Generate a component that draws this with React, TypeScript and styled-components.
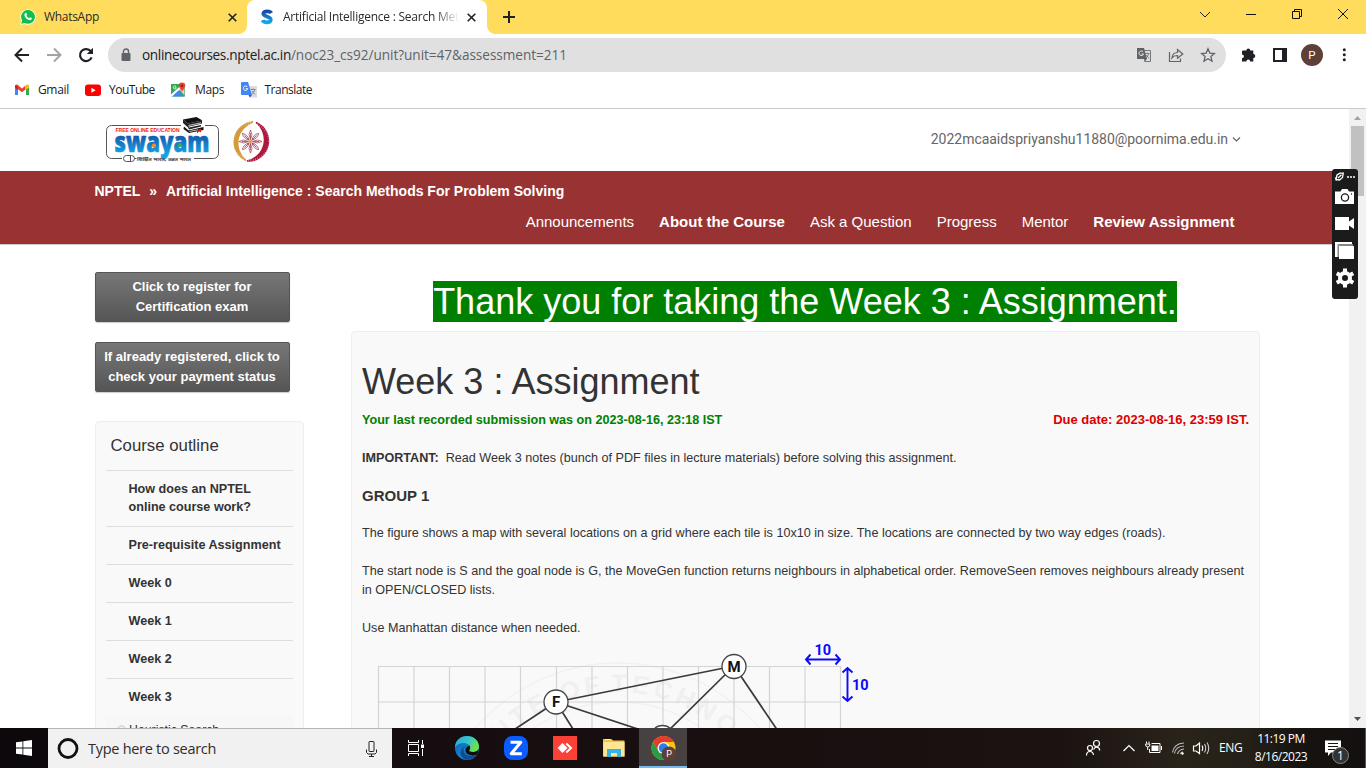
import React from "react";
import styled, { createGlobalStyle, css } from "styled-components";

const GlobalStyle = createGlobalStyle`
  * { box-sizing: border-box; }
  html, body { margin: 0; padding: 0; overflow: hidden; }
  body { font-family: "Liberation Sans", Arial, sans-serif; color: #333; background: #fff; }
  h1, h2, p { margin: 0; font-weight: normal; }
  svg { display: block; flex: none; }
`;

const ui = css`font-family: "Open Sans", "Noto Sans", sans-serif;`;

const Desktop = styled.div`
  position: relative;
  width: 1366px;
  height: 768px;
  display: flex;
  flex-direction: column;
  overflow: hidden;
`;

/* ---------- browser window ---------- */

const TabStrip = styled.div`
  ${ui}
  height: 34px;
  flex: none;
  display: flex;
  background: #ffdc5c;
  font-size: 12px;
`;

const Tab = styled.div<{ $active?: boolean; $width: number; $left: number }>`
  position: relative;
  width: ${(p) => p.$width}px;
  padding-left: ${(p) => p.$left}px;
  display: flex;
  align-items: center;
  background: ${(p) => (p.$active ? "#fff" : "transparent")};
  border-radius: 8px 8px 0 0;
  color: #2b2b2b;
  ${(p) =>
    p.$active &&
    css`
      &::before, &::after {
        content: "";
        position: absolute;
        bottom: 0;
        width: 8px;
        height: 8px;
      }
      &::before { left: -8px; background: radial-gradient(circle at 0 0, #ffdc5c 7.5px, #fff 8px); }
      &::after { right: -8px; background: radial-gradient(circle at 100% 0, #ffdc5c 7.5px, #fff 8px); }
    `}
`;

const TabTitle = styled.span<{ $width: number; $fade?: boolean; $ls: number }>`
  width: ${(p) => p.$width}px;
  margin-left: ${(p) => (p.$fade ? 9 : 8)}px;
  overflow: hidden;
  white-space: nowrap;
  line-height: 18px;
  letter-spacing: ${(p) => p.$ls}px;
  ${(p) => p.$fade && css`margin-right: 8px; mask-image: linear-gradient(90deg, #000 86%, transparent 100%);`}
`;

const NewTab = styled.div`
  flex: 1;
  display: flex;
  align-items: center;
  padding-left: 16px;
`;

const WindowButtons = styled.div`
  display: flex;
  width: 184px;
  padding: 5px 0 0 14px;
  gap: 28px;
`;

const Toolbar = styled.div`
  ${ui}
  height: 42px;
  flex: none;
  display: flex;
  align-items: center;
  padding-left: 14px;
`;

const NavButtons = styled.div`
  display: flex;
  gap: 16px;
  width: 94px;
`;

const AddressBar = styled.div`
  width: 1118px;
  height: 34px;
  border-radius: 17px;
  background: #e0e0e0;
  display: flex;
  align-items: center;
  padding: 0 10px 0 12px;
  font-size: 13.6px;
`;

const Url = styled.div`
  flex: 1;
  margin-left: 10px;
  padding-bottom: 1px;
  white-space: nowrap;
  color: #5f6368;
`;

const UrlHost = styled.span`
  color: #202124;
  letter-spacing: -0.35px;
`;

const UrlPath = styled.span`
  letter-spacing: -0.04px;
`;

const AddressIcons = styled.div`
  display: flex;
  gap: 16px;
`;

const ToolbarIcons = styled.div`
  display: flex;
  align-items: center;
  gap: 15px;
  margin-left: 15px;
  color: #202124;
`;

const Avatar = styled.div`
  width: 22px;
  height: 22px;
  margin: 0 -4px 0 -2px;
  border-radius: 50%;
  background: #5d4037;
  color: #fff;
  font: 11.5px/22px Roboto, sans-serif;
  text-align: center;
`;

const Bookmarks = styled.div`
  ${ui}
  height: 33px;
  flex: none;
  display: flex;
  align-items: flex-start;
  padding: 5.5px 0 0 14px;
  border-bottom: 1px solid #c9c9c9;
  font-size: 12px;
  color: #202124;
`;

const Bookmark = styled.div<{ $width: number; $ls: number }>`
  display: flex;
  align-items: center;
  width: ${(p) => p.$width}px;
  height: 16px;
  gap: 8px;
  letter-spacing: ${(p) => p.$ls}px;
`;

/* ---------- page ---------- */

const Viewport = styled.div`
  height: 619px;
  flex: none;
  display: flex;
`;

const Page = styled.div`
  width: 1349px;
  height: 100%;
  overflow: hidden;
  display: flex;
  flex-direction: column;
`;

const SiteHeader = styled.header`
  height: 62px;
  flex: none;
  display: flex;
  align-items: flex-start;
  padding: 6px 108px 0 105px;
`;

const Account = styled.div`
  margin-left: auto;
  padding-top: 15px;
  display: flex;
  align-items: center;
  gap: 4px;
  font: 14px/18px Roboto, sans-serif;
  letter-spacing: -0.03px;
  color: #666;
`;

const CourseBar = styled.nav`
  height: 74px;
  flex: none;
  padding: 11px 114.5px 0 94.5px;
  background: #993333;
  border-bottom: 1px solid #ccc;
  color: #fff;
`;

const Breadcrumb = styled.div`
  display: flex;
  gap: 8.9px;
  font-size: 14px;
  line-height: 18px;
  font-weight: bold;
`;

const CourseLinks = styled.div`
  display: flex;
  justify-content: flex-end;
  gap: 25px;
  margin-top: 12px;
  font-size: 15px;
  line-height: 20px;
`;

const CourseLink = styled.span<{ $bold?: boolean }>`
  font-weight: ${(p) => (p.$bold ? "bold" : "normal")};
`;

const Columns = styled.div`
  display: flex;
  flex: 1;
  min-height: 0;
  padding: 27px 0 0 95px;
`;

const Sidebar = styled.aside`
  width: 209px;
  margin-right: 47px;
  flex: none;
`;

const DarkButton = styled.div`
  width: 195px;
  height: 50px;
  margin-bottom: 20px;
  padding: 4px 1px 0 0;
  border: 1px solid #555;
  border-radius: 2px;
  background: linear-gradient(#777, #555);
  box-shadow: 0 1px 1px rgba(0, 0, 0, 0.2);
  color: #fff;
  font-size: 13px;
  font-weight: bold;
  line-height: 20px;
  text-align: center;
  white-space: nowrap;
`;

const Outline = styled.div`
  width: 209px;
  margin-top: 29px;
  height: 330px;
  padding: 0 10px;
  background: #f9f9f9;
  border: 1px solid #eee;
  border-radius: 4px;
`;

const OutlineTitle = styled.h2`
  height: 48px;
  padding: 14px 0 0 4.5px;
  font-size: 16.8px;
  line-height: 20px;
`;

const OutlineItem = styled.div`
  padding: 8.5px 0 10.5px 22.5px;
  border-top: 1px solid #ddd;
  font-size: 12.6px;
  line-height: 18px;
  font-weight: bold;
  white-space: nowrap;
`;

const OutlineSubItem = styled.div`
  display: flex;
  align-items: center;
  height: 26px;
  padding: 1px 0 0 11px;
  gap: 3px;
  background: #f7f7f7;
  font-size: 12.3px;
`;

const Bullet = styled.span`
  width: 9px;
  height: 9px;
  border: 2px solid #ddd;
  border-radius: 50%;
`;

const Main = styled.main`
  width: 909px;
`;

const Thanks = styled.h1`
  height: 59px;
  padding: 7px 1px 0 0;
  text-align: center;
  font-size: 36px;
  line-height: 45px;
`;

const ThanksText = styled.span`
  background: #008000;
  color: #fff;
`;

const Panel = styled.section`
  height: 500px;
  padding: 30px 10px 0;
  background: #f9f9f9;
  border: 1px solid #eee;
  border-radius: 4px;
  font-size: 12.6px;
  line-height: 18.9px;
`;

const PanelTitle = styled.h1`
  font-size: 36px;
  line-height: 40px;
`;

const StatusRow = styled.div`
  display: flex;
  justify-content: space-between;
  margin: 9px 0 19px;
  font-weight: bold;
`;

const Submitted = styled.span`
  color: #008000;
`;

const Due = styled.span`
  color: #dc0000;
  font-size: 13px;
`;

const Para = styled.p`
  margin-bottom: 18.8px;
  white-space: nowrap;
`;

const GroupTitle = styled.p`
  margin-bottom: 18.8px;
  font-size: 15px;
  font-weight: bold;
`;

const MapFigure = styled.div`
  margin-top: -16.5px;
`;

const ScrollTrack = styled.div`
  width: 17px;
  display: flex;
  flex-direction: column;
  align-items: center;
  justify-content: space-between;
  background: #f1f1f1;
`;

const ScrollTop = styled.div`
  display: flex;
  flex-direction: column;
  align-items: center;
`;

const ScrollThumb = styled.div`
  width: 13px;
  height: 70px;
  background: #c1c1c1;
`;

const Recorder = styled.div`
  position: absolute;
  left: 1332px;
  top: 169px;
  width: 26px;
  height: 130px;
  border-radius: 3px;
  background: #1b1b1b;
`;

/* ---------- taskbar ---------- */

const Taskbar = styled.footer`
  ${ui}
  height: 40px;
  flex: none;
  display: flex;
  align-items: stretch;
  background: linear-gradient(90deg, #0d080b 0, #150d0f 420px, #1a1010 900px, #1b1311 1060px, #29231a 1180px, #262118 1240px, #151210 1310px, #14100f 100%);
  color: #fff;
`;

const Cell = styled.div<{ $width: number; $active?: boolean }>`
  width: ${(p) => p.$width}px;
  display: flex;
  align-items: center;
  justify-content: center;
  background: ${(p) => (p.$active ? "#474141" : "transparent")};
  border-bottom: ${(p) => (p.$active ? "2px solid #76b9ed" : "0")};
  padding: ${(p) => (p.$active ? "3px 0 0 1px" : "0")};
`;

const Search = styled.div`
  width: 344px;
  display: flex;
  align-items: center;
  padding: 0 14px 0 9px;
  background: #f1f1f1;
  border-top: 1px solid #b5b5b5;
  color: #2d2d2d;
  font-size: 14.5px;
  letter-spacing: -0.28px;
`;

const SearchText = styled.span`
  flex: 1;
  margin-left: 9px;
`;

const Tray = styled.div`
  margin-left: auto;
  display: flex;
  align-items: center;
  font-size: 12px;
`;

const Lang = styled.span`
  width: 25px;
  margin: 0 0 1px 7px;
  letter-spacing: -0.4px;
`;

const Clock = styled.div`
  width: 66px;
  margin-left: 4px;
  text-align: center;
  line-height: 18px;
  letter-spacing: -0.5px;
`;

const Notice = styled.div`
  width: 46px;
  height: 40px;
  margin-left: 6px;
  border-right: 1px solid #5a5653;
`;

const CloseX = ({ size = 9 }: { size?: number }) => (
  <svg width={size} height={size} viewBox="0 0 9 9" stroke="#202124" strokeWidth="1.6">
    <path d="M0.7 0.7 8.3 8.3M8.3 0.7 0.7 8.3" />
  </svg>
);

const WhatsAppIcon = () => (
  <svg width="16" height="16" viewBox="0 0 16 16">
    <path d="M0.2 15.8 1.2 11.6A7.700 7.700 0 1 1 4.600 14.900Z" fill="#fff" />
    <path d="M1.200 14.800 2.100 11.400A6.900 6.900 0 1 1 4.700 13.900Z" fill="#10bf4b" />
    <path d="M5.200 4.200c.5-.5 1-.4 1.200 0l.7 1.500-.7 1q.9 1.700 2.700 2.500l.9-.9 1.700.8c.4.4 0 1.800-1.300 2.100-2.500.3-6-2.800-6-5.400 0-.7.300-1.200.8-1.600Z" fill="#fff" />
  </svg>
);

const SwayamTabIcon = () => (
  <svg width="14" height="16" viewBox="0 0 14 16" fill="none">
    <defs>
      <linearGradient id="sg" x1="0" y1="0" x2="0" y2="1">
        <stop offset="0" stopColor="#1749a5" />
        <stop offset="1" stopColor="#10a8e8" />
      </linearGradient>
    </defs>
    <path d="M11.300 4.200C10 1.800 4 1.500 3.300 4.600 2.800 8 11.200 6.800 10.800 11 10.300 14.500 3.600 13.800 2.500 11.300" stroke="url(#sg)" strokeWidth="3.700" />
  </svg>
);

const Books = () => (
  <g>
    <path d="M183 119.500 196.500 117 202.500 120.500 188 123.500Z" fill="#111" />
    <path d="M183 119.500V123L187.500 127 202 123.500V120.500L188 123.500Z" fill="#222" />
    <path d="M184 126.500 188.500 130.500 203.500 127V130L189 133 183.500 129Z" fill="#111" />
    <path d="M186 123.500 189 127.500 201 125V126.500L189 129.500Z" fill="#222" />
    <path d="M188.500 125.500 201 122.800M189.500 131.500 198 129.700" stroke="#eee" strokeWidth=".8" />
    <path d="M197 130.500 201 128.500V132.500L199 131.500 197 133.500Z" fill="#e31b23" />
  </g>
);

const Logos = () => (
  <svg width="170" height="52" viewBox="105 115 170 52">
    <defs>
      <linearGradient id="sw" x1="0" y1="0" x2="0" y2="1">
        <stop offset="0.350" stopColor="#1552a8" />
        <stop offset="0.850" stopColor="#12a4e4" />
      </linearGradient>
    </defs>
    <rect x="106.500" y="125.500" width="112" height="33" rx="5" fill="#fff" stroke="#555" />
    <rect x="122" y="157" width="72" height="4" fill="#fff" />
    <rect x="181" y="123" width="24" height="5" fill="#fff" />
    <text x="115.500" y="132" fontFamily="Liberation Sans" fontWeight="bold" fontSize="5" fill="#e31b23" textLength="64">FREE ONLINE EDUCATION</text>
    <text x="114.500" y="151.500" fontFamily="Open Sans" fontWeight="800" fontSize="29" fill="url(#sw)" stroke="url(#sw)" strokeWidth=".7" textLength="95" lengthAdjust="spacingAndGlyphs">swayam</text>
    <rect x="152" y="143.500" width="4" height="4" rx="1.500" fill="#f08a24" />
    <rect x="178" y="143" width="4" height="4" rx="1.500" fill="#3aa655" />
    <Books />
    <rect x="123.500" y="155.500" width="11" height="6" rx="3" fill="#fff" stroke="#555" />
    <path d="M130.500 155.500v6M134.500 158.500h2" stroke="#555" fill="none" />
    <text x="137" y="160.500" fontFamily="Noto Sans, sans-serif" fontSize="5" fill="#333" stroke="#555" strokeWidth=".2" textLength="54" lengthAdjust="spacingAndGlyphs">शिक्षित भारत, उन्नत भारत</text>
    <path d="M253 122A20.200 20.200 0 0 0 246 160.500 22.200 22.200 0 0 1 253 122Z" fill="#d49a3a" stroke="#d49a3a" strokeWidth="1.500" />
    <path d="M256 122.500A20 20 0 0 1 247 161 21.700 21.700 0 0 0 256 122.500Z" fill="#b0173d" stroke="#b0173d" strokeWidth="1.500" />
    <g fill="none">
      <circle cx="251" cy="141.500" r="18.600" stroke="#fff" strokeOpacity=".45" strokeWidth="3" strokeDasharray=".7 1.700" />
      <g stroke="#a4485a" strokeWidth="0.800">
        {[0, 45, 90, 135, 180, 225, 270, 315].map((a) => (
          <path key={a} transform={`rotate(${a} 250.500 141.500)`} d="M250.500 139.500Q247.500 134.500 250.500 130 253.500 134.500 250.500 139.500ZM250.500 139.500V133" />
        ))}
      </g>
      <circle cx="250.500" cy="141.500" r="1.800" fill="#e8a33b" />
    </g>
  </svg>
);

const gridX = [378.5, 414, 449.5, 485, 520.5, 556.5, 592, 627.5, 663, 698.5, 734, 769.5, 805, 840.5];

const MapNode = ({ x, y, label }: { x: number; y: number; label?: string }) => (
  <g>
    <circle cx={x} cy={y} r="12" fill="#fff" stroke="#444" strokeWidth="1.300" />
    {label && (
      <text x={x} y={y + 5.3} textAnchor="middle" fontFamily="Roboto" fontWeight="bold" fontSize="15" fill="#111">
        {label}
      </text>
    )}
  </g>
);

const MapGraph = () => (
  <svg width="887" height="96" viewBox="362 640 887 96">
    <defs>
      <path id="ring" d="M459.500 850A158 158 0 0 1 775.500 850" />
    </defs>
    <g fill="none" stroke="#f1f1f1" strokeWidth="1.300">
      <circle cx="617.500" cy="850" r="187" />
      <circle cx="617.500" cy="850" r="148" />
    </g>
    <g fontFamily="Liberation Sans" fontWeight="bold" fontSize="25" fill="#f0f0f0" letterSpacing="4.500">
      <text textAnchor="end">
        <textPath href="#ring" startOffset="236">TUTE OF</textPath>
      </text>
      <text>
        <textPath href="#ring" startOffset="242">TECHNO</textPath>
      </text>
    </g>
    <g stroke="#d4d4d4" strokeWidth="1.200">
      {gridX.map((x) => (
        <path key={x} d={`M${x} 666V740`} />
      ))}
      <path d="M378 666.500H841M378 702H841" />
    </g>
    <g stroke="#3a3a3a" strokeWidth="1.700">
      <path d="M556 702 734 666M556 702 503 737M556 702 578 737M556 702 662 737M734 666 662 737M734 666 782 737" />
    </g>
    <MapNode x={556} y={702} label="F" />
    <MapNode x={734} y={666.5} label="M" />
    <MapNode x={662.5} y={737.5} />
    <g fill="none" stroke="#0a0aff" strokeWidth="1.900">
      <path d="M806 659.500H840M810.500 654.500 806 659.500 810.500 664.500M835.500 654.500 840 659.500 835.500 664.500" />
      <path d="M847.500 668V701M842.500 672.500 847.500 668 852.500 672.500M842.500 696.500 847.500 701 852.500 696.500" />
    </g>
    <g fontFamily="Roboto" fontWeight="bold" fontSize="14.500" fill="#0a0aff">
      <text x="814.500" y="655">10</text>
      <text x="852" y="689.500">10</text>
    </g>
  </svg>
);

const links: [string, boolean][] = [
  ["Announcements", false],
  ["About the Course", true],
  ["Ask a Question", false],
  ["Progress", false],
  ["Mentor", false],
  ["Review Assignment", true],
];

const weeks = ["Pre-requisite Assignment", "Week 0", "Week 1", "Week 2", "Week 3"];

function BrowserChrome() {
  return (
    <>
      <TabStrip>
        <Tab $width={247} $left={20}>
          <WhatsAppIcon />
          <TabTitle $width={183.5} $ls={-0.3}>WhatsApp</TabTitle>
          <CloseX />
        </Tab>
        <Tab $active $width={240} $left={13}>
          <SwayamTabIcon />
          <TabTitle $width={175.5} $ls={-0.24} $fade>Artificial Intelligence : Search Met</TabTitle>
          <CloseX />
        </Tab>
        <NewTab>
          <svg width="12" height="12" viewBox="0 0 12 12" stroke="#202124" strokeWidth="2"><path d="M6 0V12M0 6H12" /></svg>
        </NewTab>
        <WindowButtons>
          <svg width="18" height="18" viewBox="0 0 18 18" fill="none" stroke="#202124"><path d="M4 7 9 12 14 7" /></svg>
          <svg width="18" height="18" viewBox="0 0 18 18" fill="none" stroke="#111"><path d="M4 9.500H14" /></svg>
          <svg width="18" height="18" viewBox="0 0 18 18" fill="none" stroke="#111"><path d="M4.500 6.500H11.500V13.500H4.500ZM6.500 6.500V4.500H13.500V11.500H11.500" /></svg>
          <svg width="18" height="18" viewBox="0 0 18 18" fill="none" stroke="#111"><path d="M4 4 14 14M14 4 4 14" /></svg>
        </WindowButtons>
      </TabStrip>
      <Toolbar>
        <NavButtons>
          <svg width="16" height="16" viewBox="0 0 16 16" fill="none" stroke="#202124" strokeWidth="2"><path d="M15 8H2M8 1.500 1.500 8 8 14.500" /></svg>
          <svg width="16" height="16" viewBox="0 0 16 16" fill="none" stroke="#a3a3a3" strokeWidth="2"><path d="M1 8H14M8 1.500 14.500 8 8 14.500" /></svg>
          <svg width="16" height="16" viewBox="0 0 16 16" fill="none" stroke="#202124" strokeWidth="2.200"><path d="M13.600 10.300A6 6 0 1 1 12.300 3.800L14 5.500" /><path d="M15 0.800V7H8.800Z" fill="#202124" stroke="none" /></svg>
        </NavButtons>
        <AddressBar>
          <svg width="12" height="14" viewBox="0 0 12 14"><rect x="1.500" y="5" width="9" height="8" rx="1" fill="#5f6368" /><path d="M3.500 5.500V3.500A2.500 2.500 0 0 1 8.500 3.500V5.500" fill="none" stroke="#5f6368" strokeWidth="1.400" /></svg>
          <Url>
            <UrlHost>onlinecourses.nptel.ac.in</UrlHost>
            <UrlPath>/noc23_cs92/unit?unit=47&amp;assessment=211</UrlPath>
          </Url>
          <AddressIcons>
            <svg width="16" height="16" viewBox="0 0 16 16">
              <path d="M5 3.500H14.500V14.500H8.500" fill="none" stroke="#777" />
              <path d="M1 1H8L11 12H1Z" fill="#5f6368" />
              <path d="M7.200 5A2.300 2.300 0 1 0 7.500 7H5.500" fill="none" stroke="#eee" />
              <path d="M9 6.500H13.500M11.300 5.500V6.500M12.800 6.500Q12 9.500 9.800 11M10.300 8 13 11.500" stroke="#777" fill="none" strokeWidth=".9" />
              <path d="M8 12 11 12 8.500 14.800Z" fill="#5f6368" />
            </svg>
            <svg width="16" height="16" viewBox="0 0 16 16" fill="none" stroke="#5f6368" strokeWidth="1.200">
              <path d="M1.500 5V14.500H12.500V11.500M4 11Q4.500 5.500 9.500 5.500V2.500L14.800 7 9.500 11.300V8.500Q6 8.300 4 11Z" />
            </svg>
            <svg width="16" height="16" viewBox="0 0 16 16" fill="none" stroke="#5f6368" strokeWidth="1.300">
              <path d="M8 1.800 9.800 6.100 14.500 6.500 10.900 9.600 12 14.200 8 11.700 4 14.200 5.100 9.600 1.500 6.500 6.200 6.100Z" />
            </svg>
          </AddressIcons>
        </AddressBar>
        <ToolbarIcons>
          <svg width="16" height="16" viewBox="0 0 16 16" fill="#202124"><path d="M2 3.500H5.300A2 2 0 1 1 9.300 3.500H12.300V7A2 2 0 1 1 12.300 11V14.500H9.200A1.900 1.900 0 1 0 5.400 14.500H1V11.200A1.900 1.900 0 1 0 1 7.400V4.500Q1 3.500 2 3.500Z" /></svg>
          <svg width="16" height="16" viewBox="0 0 16 16"><path d="M2 2H14V14H2Z" fill="none" stroke="#202124" strokeWidth="2" /><path d="M10 2H14V14H10Z" fill="#202124" /></svg>
          <Avatar>P</Avatar>
          <svg width="16" height="16" viewBox="0 0 16 16" fill="#202124"><circle cx="10.300" cy="2.800" r="1.500" /><circle cx="10.300" cy="7.800" r="1.500" /><circle cx="10.300" cy="12.800" r="1.500" /></svg>
        </ToolbarIcons>
      </Toolbar>
      <Bookmarks>
        <Bookmark $width={71} $ls={-0.35}>
          <svg width="16" height="16" viewBox="0 0 16 16"><path d="M1 3V13H4V6Z" fill="#4285f4" /><path d="M15 3V13H12V6Z" fill="#34a853" /><path d="M1 3.500Q3 1.500 4.500 3.500L8 6.500 11.500 3.500V7.500L8 10.300 1 5Z" fill="#ea4335" /><path d="M11.500 3.500Q14 1.500 15 4V5.500L11.500 8Z" fill="#fbbc04" /><path d="M1 4V5.500L4 8V5.500L2 3Z" fill="#c5221f" /></svg>
          Gmail
        </Bookmark>
        <Bookmark $width={86} $ls={-0.5}>
          <svg width="16" height="16" viewBox="0 0 16 16"><rect y="2.500" width="16" height="11.500" rx="3" fill="#f00" /><path d="M6.400 5.700V10.800L10.700 8.250Z" fill="#fff" /></svg>
          YouTube
        </Bookmark>
        <Bookmark $width={69.5} $ls={-0.38}>
          <svg width="16" height="16" viewBox="0 0 16 16"><path d="M0 2H11L14 6V14.500H0Z" fill="#34a853" /><path d="M0 12.500 11 2.500V5.500L2 14.500H0Z" fill="#fff" /><path d="M1 14.500 7.500 8.500 13 14.500Z" fill="#4285f4" /><path d="M8.500 7.500 13.500 13.500V6Z" fill="#d8d8d8" /><path d="M11 0.500A3.300 3.300 0 0 1 14.300 3.800Q14 6 11.200 9.500 8 6 7.700 3.800A3.300 3.300 0 0 1 11 0.500Z" fill="#ea4335" /><circle cx="11" cy="3.800" r="1.200" fill="#8c1d18" /><path d="M5 4.500A1.500 1.500 0 1 0 5.300 5.700H4" fill="none" stroke="#fff" strokeWidth=".8" /></svg>
          <span>Maps</span>
        </Bookmark>
        <Bookmark $width={90} $ls={-0.5}>
          <svg width="16" height="16" viewBox="0 0 16 16"><path d="M6 4H16V15.500H9Z" fill="#dcdcdc" /><path d="M0 1Q0 0 1 0H7L11 13H1Q0 13 0 12Z" fill="#4285f4" /><path d="M7.500 13H11L8.800 15.500Z" fill="#2a56c6" /><path d="M6.400 5A2.200 2.200 0 1 0 6.700 6.700H4.700" fill="none" stroke="#fff" /><path d="M9.500 7.500H14.500M12 6.500V7.500M14 7.500Q13 10.500 10.800 12M11 9 13.800 12.500" fill="none" stroke="#7b8a99" /></svg>
          Translate
        </Bookmark>
      </Bookmarks>
    </>
  );
}

function CoursePage() {
  return (
    <Page>
      <SiteHeader>
        <Logos />
        <Account>
          2022mcaaidspriyanshu11880@poornima.edu.in
          <svg width="9" height="7" viewBox="0 0 9 7" fill="none" stroke="#666" strokeWidth="1.200"><path d="M1 1.500 4.500 5 8 1.500" /></svg>
        </Account>
      </SiteHeader>
      <CourseBar>
        <Breadcrumb>
          <span>NPTEL</span>
          <span>»</span>
          <span>Artificial Intelligence : Search Methods For Problem Solving</span>
        </Breadcrumb>
        <CourseLinks>
          {links.map(([label, bold]) => (
            <CourseLink key={label} $bold={bold}>{label}</CourseLink>
          ))}
        </CourseLinks>
      </CourseBar>
      <Columns>
        <Sidebar>
          <DarkButton>Click to register for<br />Certification exam</DarkButton>
          <DarkButton>If already registered, click to<br />check your payment status</DarkButton>
          <Outline>
            <OutlineTitle>Course outline</OutlineTitle>
            <OutlineItem>How does an NPTEL<br />online course work?</OutlineItem>
            {weeks.map((w) => (
              <OutlineItem key={w}>{w}</OutlineItem>
            ))}
            <OutlineSubItem><Bullet />Heuristic Search</OutlineSubItem>
          </Outline>
        </Sidebar>
        <Main>
          <Thanks><ThanksText>Thank you for taking the Week 3 : Assignment.</ThanksText></Thanks>
          <Panel>
            <PanelTitle>Week 3 : Assignment</PanelTitle>
            <StatusRow>
              <Submitted>Your last recorded submission was on 2023-08-16, 23:18 IST</Submitted>
              <Due>Due date: 2023-08-16, 23:59 IST.</Due>
            </StatusRow>
            <Para><b>IMPORTANT:</b>&nbsp; Read Week 3 notes (bunch of PDF files in lecture materials) before solving this assignment.</Para>
            <GroupTitle>GROUP 1</GroupTitle>
            <Para>The figure shows a map with several locations on a grid where each tile is 10x10 in size. The locations are connected by two way edges (roads).</Para>
            <Para>The start node is S and the goal node is G, the MoveGen function returns neighbours in alphabetical order. RemoveSeen removes neighbours already present<br />in OPEN/CLOSED lists.</Para>
            <Para>Use Manhattan distance when needed.</Para>
            <MapFigure><MapGraph /></MapFigure>
          </Panel>
        </Main>
      </Columns>
    </Page>
  );
}

function RecorderWidget() {
  return (
    <Recorder>
      <svg width="26" height="130" viewBox="0 0 26 130" fill="none">
        <path d="M3.800 11.500 5 6 8 4.200H11.300L10.500 8.500 7.500 11 4.500 10.500M6 9 9.500 5.800M3 9.500 5 8" stroke="#fff" strokeWidth="1.300" />
        <path d="M15 8h2M18 8h2M21 8h2" stroke="#fff" strokeWidth="1.500" />
        <path d="M3 22.500H8.500L10 20H15.500L17 22.500H22V35H3Z" fill="#fff" />
        <circle cx="13" cy="28.500" r="3.600" stroke="#1b1b1b" strokeWidth="1.300" />
        <circle cx="19.500" cy="25" r=".7" fill="#1b1b1b" />
        <path d="M3 48H17V52.500L22 49V60L17 56.500V61H3Z" fill="#fff" />
        <path d="M3 73H20V75H6V88H3Z" fill="#fff" />
        <path d="M6 88V76H21" stroke="#aaa" strokeWidth="1.500" />
        <path d="M7 77H22V90H7Z" fill="#fff" />
        <circle cx="13" cy="109" r="5" stroke="#fff" strokeWidth="4" />
        <g stroke="#fff" strokeWidth="4">
          {[0, 60, 120].map((a) => (
            <path key={a} d="M13 99.500V104M13 114V118.500" transform={`rotate(${a} 13 109)`} />
          ))}
        </g>
      </svg>
    </Recorder>
  );
}

function WindowsTaskbar() {
  return (
    <Taskbar>
      <Cell $width={48}>
        <svg width="16" height="16" viewBox="0 0 16 16" fill="#fff"><path d="M0 2.300 6.500 1.400V7.600H0ZM7.300 1.300 16 0V7.600H7.300ZM0 8.400H6.500V14.600L0 13.700ZM7.300 8.400H16V16L7.300 14.700Z" /></svg>
      </Cell>
      <Search>
        <svg width="22" height="22" viewBox="0 0 22 22"><circle cx="11" cy="10.500" r="9" fill="none" stroke="#111" strokeWidth="2.800" /></svg>
        <SearchText>Type here to search</SearchText>
        <svg width="13" height="18" viewBox="0 0 13 18" fill="none" stroke="#222"><rect x="4" y="1.500" width="5" height="10" rx=".5" /><path d="M1.500 9.500V12.500L3 14H10L11.500 12.500V9.500M6.500 14V16.500M4 16.500H9" /></svg>
      </Search>
      <Cell $width={48}>
        <svg width="18" height="16" viewBox="0 0 18 16" fill="none" stroke="#fff"><path d="M1.500 0V2.500H11.500V0M1.500 4.500H11.500V11.500H1.500ZM1.500 16V13.500H11.500V16M15.500 0V4M15.500 9V16" /><path d="M14 4.500H17V8H14Z" fill="#fff" stroke="none" /></svg>
      </Cell>
      <Cell $width={54}>
        <svg width="24" height="24" viewBox="0 0 24 24">
          <defs>
            <linearGradient id="e1" x1="0" y1="0" x2="1" y2=".4"><stop offset="0" stopColor="#2aa7e0" /><stop offset=".55" stopColor="#35c3d0" /><stop offset="1" stopColor="#6fe04a" /></linearGradient>
            <linearGradient id="e2" x1="0" y1="0" x2="1" y2="1"><stop offset="0" stopColor="#0a5fb4" /><stop offset="1" stopColor="#1b9de2" /></linearGradient>
          </defs>
          <circle cx="12" cy="12" r="12" fill="url(#e2)" />
          <path d="M0 11.500C0 4.500 5.500 0 12 0 19 0 24 5 24 10.500 24 14 21.500 16 18 16 15 16 13.800 15 14.300 14 15.500 12.500 15.300 11 14.500 9.500 12.500 6.500 4 5.500 0 11.500Z" fill="url(#e1)" />
          <path d="M8.500 12.500C8 18 13 21.500 21.500 19 19 22.500 15.500 24 12 24 7 23 4.500 18.500 6 14.500 7 11.500 10 10 12 10.500 9.500 11 8.500 12 8.500 12.500Z" fill="#0b4d96" />
          <path d="M14.300 14C13.800 15 15 16 18 16 20.500 16 22.500 15 23.500 13.300 23.400 16 22.700 17.700 21.500 19 15 20.500 10.500 18 10.500 14.500 10.500 12 12 10.500 14.500 9.500 15.300 11 15.500 12.500 14.300 14Z" fill="#140d0f" />
        </svg>
      </Cell>
      <Cell $width={44}>
        <svg width="24" height="24" viewBox="0 0 24 24"><rect width="24" height="24" rx="8.500" fill="#0b5cff" /><path d="M6.500 6.300H16.800L7.200 17.700H17.800" fill="none" stroke="#fff" strokeWidth="3" strokeLinejoin="round" /></svg>
      </Cell>
      <Cell $width={54}>
        <svg width="24" height="24" viewBox="0 0 24 24"><rect width="24" height="24" fill="#fb4136" /><path d="M9.500 7 14.500 12 9.500 17 4.500 12Z" fill="#fff" /><path d="M13.300 7.500 18 12 13.300 16.500" fill="none" stroke="#fff" strokeWidth="2" /></svg>
      </Cell>
      <Cell $width={43}>
        <svg width="22" height="20" viewBox="0 0 22 20"><path d="M0 1H8.500L10 2.500H21.500V18.500H0Z" fill="#f5c242" /><path d="M0.500 4H21.500V18.500H0.500Z" fill="#ffe695" /><path d="M4 11H18V19H14V15H8V19H4Z" fill="#35b3e6" /><path d="M2 1.500H7" stroke="#fff3c0" /></svg>
      </Cell>
      <Cell $width={4} />
      <Cell $width={48} $active>
        <svg width="26" height="26" viewBox="0 0 26 26">
          <circle cx="12.500" cy="12" r="12" fill="#fbc116" />
          <path d="M2.100 6A12 12 0 0 1 22.900 6H12.500L7.300 15Z" fill="#e33b2e" />
          <path d="M2.100 6A12 12 0 0 0 12.500 24L17.700 15H7.300Z" fill="#2b9a48" />
          <circle cx="12.500" cy="12" r="6" fill="#fff" />
          <circle cx="12.500" cy="12" r="4.700" fill="#2b7de9" />
          <circle cx="18" cy="18" r="7.500" fill="#5d4037" />
          <text x="18" y="21.300" textAnchor="middle" fontFamily="Roboto" fontSize="9" fill="#fff">P</text>
        </svg>
      </Cell>
      <Tray>
        <svg width="120" height="20" viewBox="1084 738 120 20" fill="none" stroke="#fff" strokeWidth="1.200">
          <circle cx="1096.500" cy="743.500" r="3" />
          <circle cx="1090" cy="748" r="2.500" />
          <path d="M1086.500 755.500Q1086.500 751.500 1090 751.500 1093 751.500 1093.500 755M1093.500 749.500Q1095 746.800 1097 747.200 1099.500 747.500 1099.700 750.500" />
          <path d="M1123.500 751 1129 745.500 1134.500 751" />
          <rect x="1151.500" y="745.500" width="7" height="5.500" fill="#fff" stroke="none" />
          <path d="M1151.500 743.500H1160V752.500H1149.500V749M1161.500 746V750M1146.500 741.500V743.500M1149 741.500V743.500M1145.500 744H1150Q1150 747 1147.800 747 1145.500 747 1145.500 744ZM1147.700 747V750" strokeWidth="1" />
          <path d="M1172.500 752.500Q1174 743.500 1184 743M1174.500 753.500Q1175.500 746.500 1184 746M1177.500 754Q1178.500 749.500 1184 749M1180.500 754Q1181 752 1183 752" stroke="#bbb" />
          <circle cx="1182.500" cy="753.500" r="1.200" fill="#fff" stroke="none" />
          <path d="M1193.500 746H1196L1199.500 743V753.500L1196 751H1193.500Z" />
          <path d="M1202 745.500Q1203.500 748 1202 751" />
        </svg>
        <svg width="8" height="20" viewBox="1203 738 8 20" fill="none" stroke="#ccc" strokeWidth="1.100"><path d="M1203.500 744Q1206 748 1203.500 752.500M1206 742.500Q1209.500 748 1206 754" /></svg>
        <Lang>ENG</Lang>
        <Clock>11:19 PM<br />8/16/2023</Clock>
        <Notice>
          <svg width="40" height="40" viewBox="1320 728 40 40">
            <path d="M1325 740.500H1341V752.500H1331L1328 756V752.500H1325Z" fill="#fff" />
            <path d="M1328 743.500H1338M1328 746.500H1338M1328 749.500H1335" stroke="#1a1512" />
            <circle cx="1340.500" cy="755.500" r="8" fill="#333" stroke="#888" />
            <text x="1340.500" y="759.500" textAnchor="middle" fontFamily="Open Sans" fontSize="12" fill="#fff">1</text>
          </svg>
        </Notice>
      </Tray>
    </Taskbar>
  );
}

export default function App() {
  return (
    <Desktop>
      <GlobalStyle />
      <BrowserChrome />
      <Viewport>
        <CoursePage />
        <ScrollTrack>
          <ScrollTop>
            <svg width="17" height="17" viewBox="0 0 17 17"><path d="M5 11 8.500 7 12 11Z" fill="#a3a3a3" /></svg>
            <ScrollThumb />
          </ScrollTop>
          <svg width="17" height="17" viewBox="0 0 17 17"><path d="M5 6 8.500 10 12 6Z" fill="#505050" /></svg>
        </ScrollTrack>
      </Viewport>
      <WindowsTaskbar />
      <RecorderWidget />
    </Desktop>
  );
}
